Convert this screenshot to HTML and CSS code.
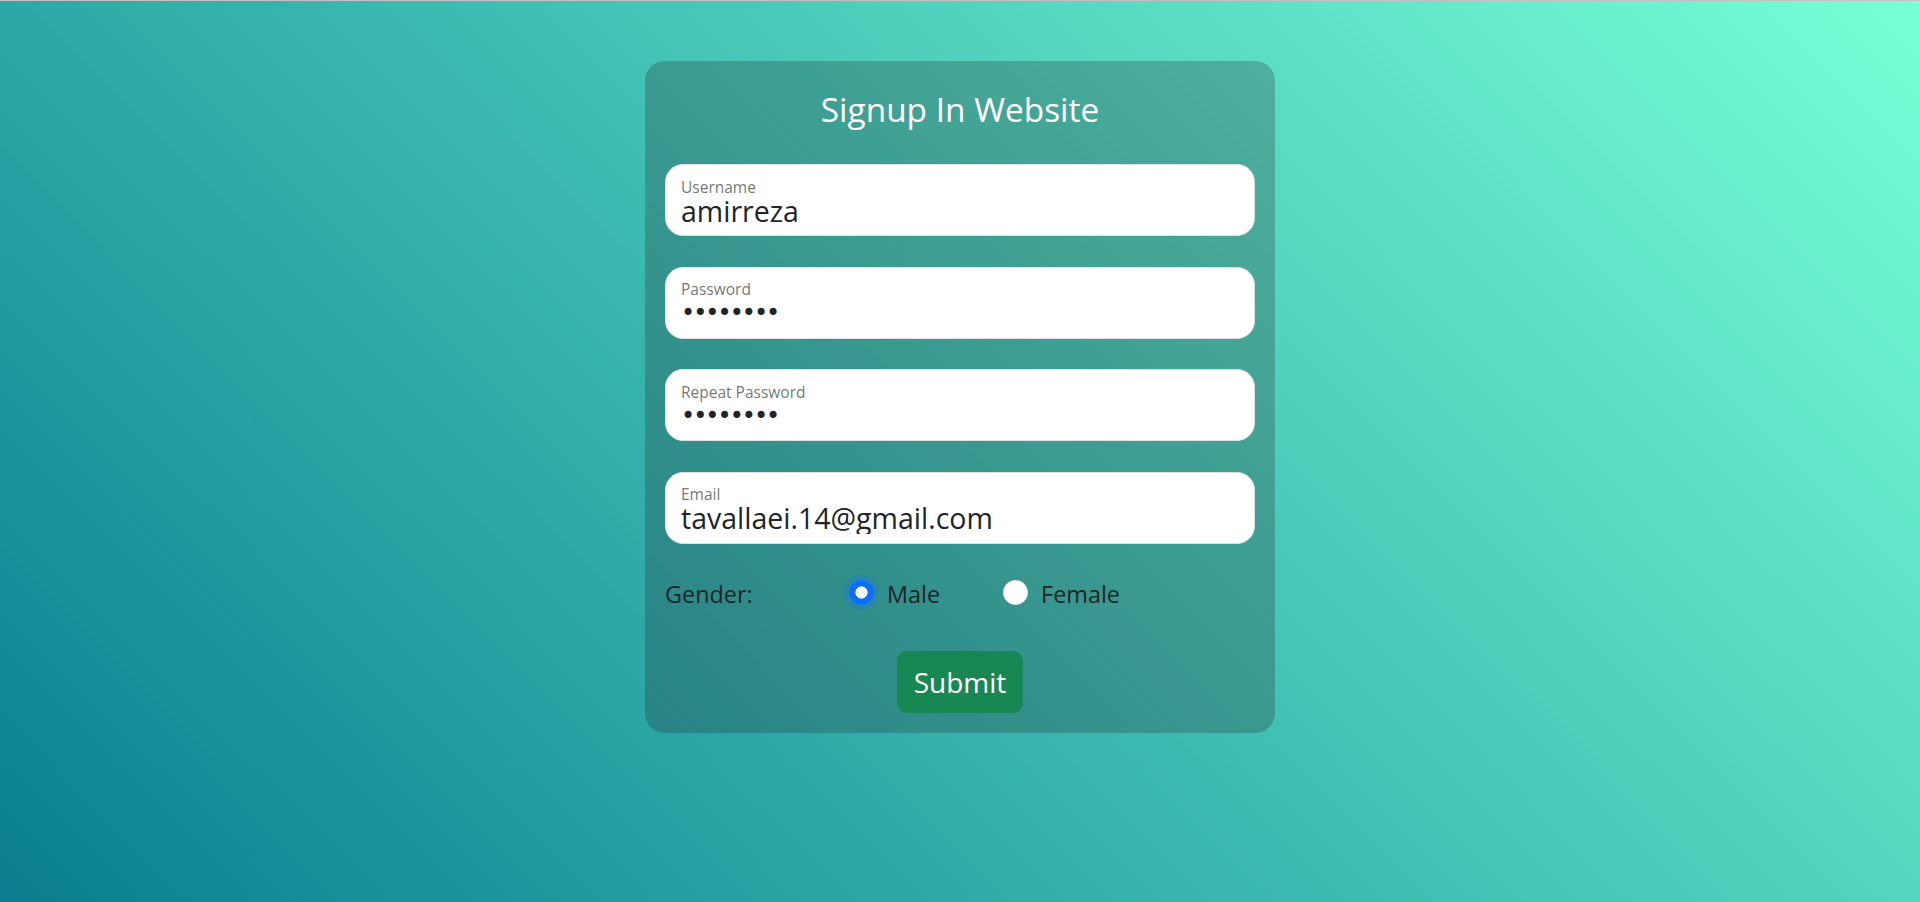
FILE: index.html
```html
<!DOCTYPE html>
<html lang="en">
<head>
<meta charset="utf-8">
<title>Signup In Website</title>
<link rel="stylesheet" href="styles.css">
</head>
<body>
<main class="page">
  <form class="card">
    <h1 class="title">Signup In Website</h1>
    <div class="fields">
      <div class="field">
        <label class="field-label" for="username">Username</label>
        <input class="field-input" id="username" type="text" value="amirreza">
      </div>
      <div class="field">
        <label class="field-label" for="password">Password</label>
        <input class="field-input field-secret" id="password" type="password" value="12345678">
      </div>
      <div class="field">
        <label class="field-label" for="repeat">Repeat Password</label>
        <input class="field-input field-secret" id="repeat" type="password" value="12345678">
      </div>
      <div class="field">
        <label class="field-label" for="email">Email</label>
        <input class="field-input" id="email" type="email" value="tavallaei.14@gmail.com">
      </div>
    </div>
    <div class="gender-row">
      <span class="gender-label">Gender:</span>
      <label class="option">
        <input class="radio" type="radio" name="gender" checked>
        <span>Male</span>
      </label>
      <label class="option">
        <input class="radio" type="radio" name="gender">
        <span>Female</span>
      </label>
    </div>
    <div class="actions">
      <button class="submit" type="button">Submit</button>
    </div>
  </form>
</main>
</body>
</html>
```

FILE: styles.css
```css
html {
  margin: 0;
  height: 100%;
  border-top: 1px solid #c2c2c2;
  box-sizing: border-box;
}

body {
  margin: 0;
  min-height: 901px;
  font-family: "Open Sans", "Noto Sans", sans-serif;
  color: #212529;
  background: linear-gradient(45deg, #0a7e90 0%, #78ffd6 100%);
  background-attachment: fixed;
}

.page {
  display: flex;
  justify-content: center;
  padding-top: 60px;
}

.card {
  width: 630px;
  box-sizing: border-box;
  padding: 27.5px 20px 20px;
  border-radius: 20px;
  background: rgba(33, 37, 41, 0.25);
  display: flex;
  flex-direction: column;
}

.title {
  margin: 0 0 35.5px;
  font-size: 33.4px;
  line-height: 40px;
  font-weight: 400;
  color: #ffffff;
  text-align: center;
}

.fields {
  display: flex;
  flex-direction: column;
  gap: 30.6px;
}

.field {
  height: 72px;
  box-sizing: border-box;
  padding: 13.5px 15px 0;
  background: #ffffff;
  border: 1px solid #dee2e6;
  border-radius: 18px;
  display: flex;
  flex-direction: column;
}

.field-label {
  font-size: 15.5px;
  line-height: 16px;
  color: rgba(33, 37, 41, 0.65);
}

.field-input {
  border: 0;
  outline: 0;
  padding: 0;
  margin: 0;
  background: transparent;
  font-family: "Open Sans", "Noto Sans", sans-serif;
  font-size: 28.5px;
  line-height: 32px;
  height: 32px;
  color: #212529;
  width: 100%;
}

.field-secret {
  font-family: "DejaVu Sans", sans-serif;
  font-size: 24px;
  letter-spacing: -2px;
}

.gender-row {
  margin-top: 36px;
  display: flex;
  align-items: flex-start;
  font-size: 23.4px;
  line-height: 28px;
  color: #212529;
}

.gender-label {
  width: 184px;
  flex: none;
}

.option {
  display: flex;
  align-items: flex-start;
  gap: 13px;
  margin-right: 63px;
}

.radio {
  appearance: none;
  -webkit-appearance: none;
  margin: 0.5px 0 0;
  width: 25px;
  height: 25px;
  border-radius: 50%;
  background: #ffffff;
  border: 1px solid rgba(0, 0, 0, 0.12);
  box-sizing: border-box;
  flex: none;
}

.radio:checked {
  border-color: #0d6efd;
  background: radial-gradient(circle, #ffffff 0 5.8px, #0d6efd 6.4px);
  box-shadow: 0 0 0 5px rgba(13, 110, 253, 0.25);
}

.actions {
  margin-top: 43px;
  display: flex;
  justify-content: center;
}

.submit {
  height: 62px;
  padding: 0 16px;
  border: 1px solid #198754;
  border-radius: 10px;
  background: #198754;
  color: #ffffff;
  font-family: "Open Sans", "Noto Sans", sans-serif;
  font-size: 28px;
  line-height: 38px;
}
```
